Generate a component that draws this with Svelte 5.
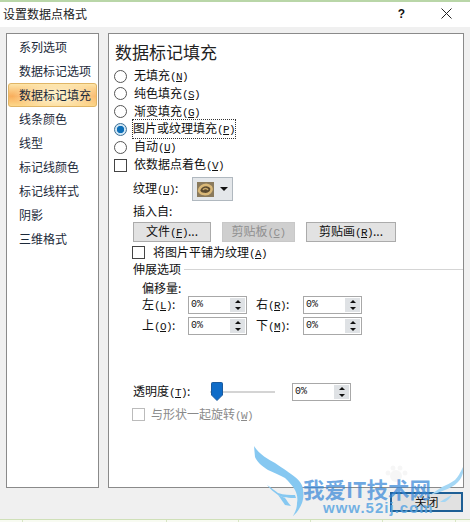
<script>
  const categories = ['系列选项', '数据标记选项', '数据标记填充', '线条颜色', '线型', '标记线颜色', '标记线样式', '阴影', '三维格式'];
  const selected = 2;
  const fills = [
    { text: '无填充', key: 'N' },
    { text: '纯色填充', key: 'S' },
    { text: '渐变填充', key: 'G' },
    { text: '图片或纹理填充', key: 'P', on: true },
    { text: '自动', key: 'U' }
  ];
  const ticks = [22, 166, 238, 310, 382, 455];
</script>

{#snippet spin(value)}
  <div class="spin">
    <span class="spin-value">{value}</span>
    <span class="spin-btns">
      <i class="up"></i>
      <i class="down"></i>
    </span>
  </div>
{/snippet}

{#snippet key(letter)}
  <span class="key">(<u>{letter}</u>)</span>
{/snippet}

<div class="window">
  <div class="sheet-top"></div>
  <header class="titlebar">
    <span class="title">设置数据点格式</span>
    <span class="help">?</span>
    <svg class="close-x" width="11" height="11" viewBox="0 0 11 11"><path d="M0.5 0.5L10.5 10.5M10.5 0.5L0.5 10.5" stroke="#222" fill="none" /></svg>
  </header>

  <div class="dialog">
    <div class="panes">
      <ul class="nav">
        {#each categories as item, i}
          <li class:active={i === selected}>{item}</li>
        {/each}
      </ul>

      <section class="content">
        <h2>数据标记填充</h2>
        <div class="radios">
          {#each fills as fill}
            <div class="opt">
              <span class="radio" class:on={fill.on}></span>
              <span class:focus={fill.on}>{fill.text}{@render key(fill.key)}</span>
            </div>
          {/each}
          <div class="opt">
            <span class="check"></span>
            <span>依数据点着色{@render key('V')}</span>
          </div>
        </div>

        <div class="texture">
          <span class="lbl">纹理{@render key('U')}:</span>
          <div class="tex-btn">
            <svg width="17" height="15" viewBox="0 0 17 15">
              <rect width="17" height="15" fill="#8a7a5c" />
              <path d="M2 9C3 3 10 1 14 5C16 9 12 13 7 12C5 12 3 11 2 9Z" stroke="#d9b878" stroke-width="2.5" fill="#5a4a30" />
              <path d="M6 8C7 6 10 6 11 8" stroke="#c9a868" stroke-width="1.5" fill="none" />
            </svg>
            <span class="caret"></span>
          </div>
        </div>

        <div class="insert-lbl">插入自:</div>
        <div class="buttons">
          <button class="b1">文件{@render key('F')}...</button>
          <button class="b2" disabled>剪贴板{@render key('C')}</button>
          <button class="b3">剪贴画{@render key('R')}...</button>
        </div>

        <div class="opt tile">
          <span class="check"></span>
          <span>将图片平铺为纹理{@render key('A')}</span>
        </div>

        <div class="group">
          <span>伸展选项</span>
          <span class="rule"></span>
        </div>
        <div class="offset-lbl">偏移量:</div>
        <div class="offsets">
          <span>左{@render key('L')}:</span>
          {@render spin('0%')}
          <span class="second">右{@render key('R')}:</span>
          {@render spin('0%')}
          <span>上{@render key('O')}:</span>
          {@render spin('0%')}
          <span class="second">下{@render key('M')}:</span>
          {@render spin('0%')}
        </div>

        <div class="transparency">
          <span class="lbl">透明度{@render key('T')}:</span>
          <div class="slider">
            <svg class="thumb" width="12" height="19" viewBox="0 0 12 19"><path d="M0.5 1.5Q0.5 0.5 1.5 0.5H10.5Q11.5 0.5 11.5 1.5V13L6 18.5L0.5 13Z" fill="#0f6cc8" stroke="#1a5a9e" /></svg>
          </div>
          {@render spin('0%')}
        </div>

        <div class="opt rotate">
          <span class="check dim"></span>
          <span>与形状一起旋转{@render key('W')}</span>
        </div>
      </section>
    </div>

    <div class="footer">
      <button class="close">关闭</button>
    </div>
  </div>

  <div class="sheet-bottom">
    {#each ticks as x}
      <i style="left: {x}px"></i>
    {/each}
  </div>

  <div class="watermark">
    <svg width="216" height="76" viewBox="0 0 216 76">
      <g fill="#000" fill-opacity="0.035">
        <circle cx="142" cy="30" r="6" />
        <circle cx="134" cy="27" r="2.5" />
        <circle cx="139" cy="22" r="2.5" />
        <circle cx="146" cy="22" r="2.5" />
        <circle cx="151" cy="27" r="2.5" />
      </g>
      <g fill="#86c8f1">
        <path d="M0 0C6 9 14 13 21 17C30 23 36 27 41 31C47 36 49 40 49 44C50 50 49 54 48 57C46 62 43 67 39 70C42 65 43 61 43 57C44 52 43 48 41 44C38 39 35 36 31 32C26 29 20 27 14 24C8 20 3 16 1 11Z" />
        <path d="M13 39C18 42 21 45 24 47C30 49 36 49 41 49L42 52C35 52 29 52 24 49C20 46 16 43 13 39Z" />
        <path d="M24 49C27 53 29 56 31 59L37 60C34 57 33 54 31 52Z" />
      </g>
      <g fill="#a4d7f5">
        <path d="M209 21C206 27 204 31 201 34C197 37 192 39 188 41C184 44 180 46 176 49C180 48 186 46 191 44C196 42 200 40 204 36C207 33 208 30 209 27Z" />
        <path d="M198 49C194 51 190 53 186 56L191 56C194 54 196 52 198 49Z" />
      </g>
    </svg>
    <span class="wm-name">我爱IT技术网</span>
    <span class="wm-url">www.52ij.com</span>
  </div>
</div>

<style>
  :global(body) {
    margin: 0;
  }

  .window {
    position: relative;
    width: 470px;
    height: 522px;
    overflow: hidden;
    display: flex;
    flex-direction: column;
    background: #f0f0f0;
    color: #111;
    font: 12px/16px "Noto Sans CJK SC", "Liberation Sans", sans-serif;
  }

  .key {
    font-family: "Liberation Mono", monospace;
    font-size: 11px;
    letter-spacing: -0.6px;
  }

  .sheet-top {
    height: 2px;
    background: #b9d6a8;
    flex: none;
  }

  .titlebar {
    height: 25px;
    flex: none;
    display: flex;
    align-items: center;
    background: #fff;
    padding: 0 18px 2px 3px;
    box-sizing: border-box;
  }

  .title {
    flex: 1;
    color: #222;
  }

  .help {
    font: bold 12px "Liberation Sans", sans-serif;
    margin-right: 36px;
  }

  .dialog {
    flex: 1;
    display: flex;
    flex-direction: column;
    padding: 6px 6px 0;
    min-height: 0;
  }

  .panes {
    display: flex;
    gap: 9px;
    height: 455px;
    flex: none;
  }

  .nav {
    width: 93px;
    box-sizing: border-box;
    list-style: none;
    margin: 0;
    padding: 1px;
    background: #fff;
    border: 1px solid #8a8a8a;
  }

  .nav li {
    height: 24px;
    line-height: 24px;
    padding-left: 11px;
    color: #1c2a3a;
  }

  .nav li.active {
    border-radius: 3px;
    box-shadow: inset 0 0 0 1px #e0b566;
    background:
      radial-gradient(ellipse 50% 60% at 55% 55%, #fdeec4 30%, rgba(253, 238, 196, 0) 100%),
      linear-gradient(#fdeab0, #f9ae5c 55%, #fddc90);
  }

  .content {
    flex: 1;
    box-sizing: border-box;
    background: #fff;
    border: 1px solid #8a8a8a;
    padding: 6px 0 0 6px;
  }

  h2 {
    margin: 0;
    font-size: 17px;
    font-weight: 400;
    line-height: 24px;
    color: #222;
  }

  .radios {
    margin: 3.5px 0 0 -1px;
    display: flex;
    flex-direction: column;
    gap: 0.6px;
  }

  .opt {
    display: flex;
    align-items: center;
    height: 17.2px;
    gap: 7px;
  }

  .radio {
    width: 11px;
    height: 11px;
    border: 1px solid #555;
    border-radius: 50%;
    background: #fff;
    flex: none;
  }

  .radio.on {
    background: radial-gradient(circle, #0d6fb8 0 3.4px, #cfe6f5 4px);
    border-color: #3c6f95;
  }

  .check {
    width: 11px;
    height: 11px;
    border: 1px solid #444;
    background: #fff;
    flex: none;
  }

  .check.dim {
    border-color: #bbb;
  }

  .focus {
    outline: 1px dotted #333;
    margin-left: -1px;
  }

  .texture {
    display: flex;
    align-items: center;
    margin: 3.5px 0 0 18px;
    height: 24px;
  }

  .texture .lbl {
    width: 59px;
  }

  .tex-btn {
    width: 41px;
    height: 24px;
    box-sizing: border-box;
    border: 1px solid #b0b8bf;
    background: #e4e7ea;
    display: flex;
    align-items: center;
    gap: 6px;
    padding-left: 4px;
  }

  .caret {
    width: 0;
    height: 0;
    border: 4px solid transparent;
    border-top: 4px solid #111;
    border-bottom: 0;
  }

  .insert-lbl {
    margin: 1px 0 0 18px;
    height: 18px;
    line-height: 18px;
  }

  .buttons {
    margin: 2px 0 0 18px;
    display: flex;
    gap: 11px;
  }

  button {
    height: 20px;
    box-sizing: border-box;
    padding: 0;
    border: 1px solid #ababab;
    background: #e2e2e2;
    font: inherit;
    color: #111;
  }

  .b1 { width: 78px; }
  .b2 { width: 73px; background: #cfcfcf; color: #8f8f8f; border-color: #c8c8c8; }
  .b3 { width: 90px; }

  .tile {
    margin: 2px 0 0 17px;
    height: 17px;
    gap: 8px;
  }

  .group {
    display: flex;
    align-items: center;
    margin: -1px 0 0 18px;
    height: 18px;
    gap: 3px;
  }

  .rule {
    flex: 1;
    border-top: 1px solid #d5d5d5;
  }

  .offset-lbl {
    margin: 1px 0 0 27px;
    height: 17px;
    line-height: 17px;
  }

  .offsets {
    margin: 0 0 0 27px;
    display: grid;
    grid-template-columns: 46px 59px 56px 59px;
    grid-auto-rows: 18px;
    row-gap: 3px;
    align-items: center;
    height: 39px;
  }

  .second {
    margin-left: 9px;
  }

  .spin {
    width: 59px;
    height: 18px;
    box-sizing: border-box;
    border: 1px solid #a8a8a8;
    display: flex;
    background: #fff;
  }

  .spin-value {
    flex: 1;
    font: 10px/16px "Liberation Mono", monospace;
    padding-left: 2px;
  }

  .spin-btns {
    width: 15px;
    margin: 1px;
    display: flex;
    flex-direction: column;
    background: #dfe2e5;
  }

  .spin-btns i {
    flex: 1;
    display: flex;
    align-items: center;
    justify-content: center;
  }

  .spin-btns .up::before {
    content: '';
    border: 3px solid transparent;
    border-bottom: 3px solid #111;
    border-top: 0;
  }

  .spin-btns .down::before {
    content: '';
    border: 3px solid transparent;
    border-top: 3px solid #111;
    border-bottom: 0;
  }

  .transparency {
    display: flex;
    align-items: center;
    margin: 47px 0 0 18px;
    height: 19px;
  }

  .transparency .lbl {
    width: 77px;
  }

  .slider {
    width: 65px;
    height: 19px;
    margin-right: 17px;
    display: flex;
    align-items: center;
    background: linear-gradient(#d4d4d4, #d4d4d4) center / 100% 2px no-repeat;
  }

  .thumb {
    margin-left: 1px;
  }

  .rotate {
    margin: 5px 0 0 17px;
    gap: 6px;
    color: #8a8a8a;
  }

  .footer {
    display: flex;
    justify-content: flex-end;
    margin-top: 4px;
    padding-right: 1px;
  }

  .close {
    width: 73px;
    height: 20px;
    border: 2px solid #1e5f95;
    background: #e1e1e1;
  }

  .sheet-bottom {
    position: absolute;
    left: 0;
    right: 0;
    bottom: 0;
    height: 2px;
    background: #f8fbf2;
    border-top: 1px solid #cfe0b8;
  }

  .sheet-bottom i {
    position: absolute;
    top: 0;
    bottom: 0;
    width: 1px;
    background: #d8e6c4;
  }

  .watermark {
    position: absolute;
    left: 254px;
    top: 446px;
    width: 216px;
    height: 76px;
    pointer-events: none;
  }

  .watermark svg {
    position: absolute;
    left: 0;
    top: 0;
  }

  .wm-name {
    position: absolute;
    left: 49px;
    top: 29px;
    font-size: 21.5px;
    line-height: 28px;
    font-weight: 700;
    color: rgba(55, 135, 215, 0.72);
    white-space: nowrap;
  }

  .wm-url {
    position: absolute;
    left: 69px;
    top: 54px;
    font: bold 15px/16px "Liberation Sans", sans-serif;
    letter-spacing: 1px;
    color: rgba(90, 165, 225, 0.85);
    white-space: nowrap;
  }
</style>
